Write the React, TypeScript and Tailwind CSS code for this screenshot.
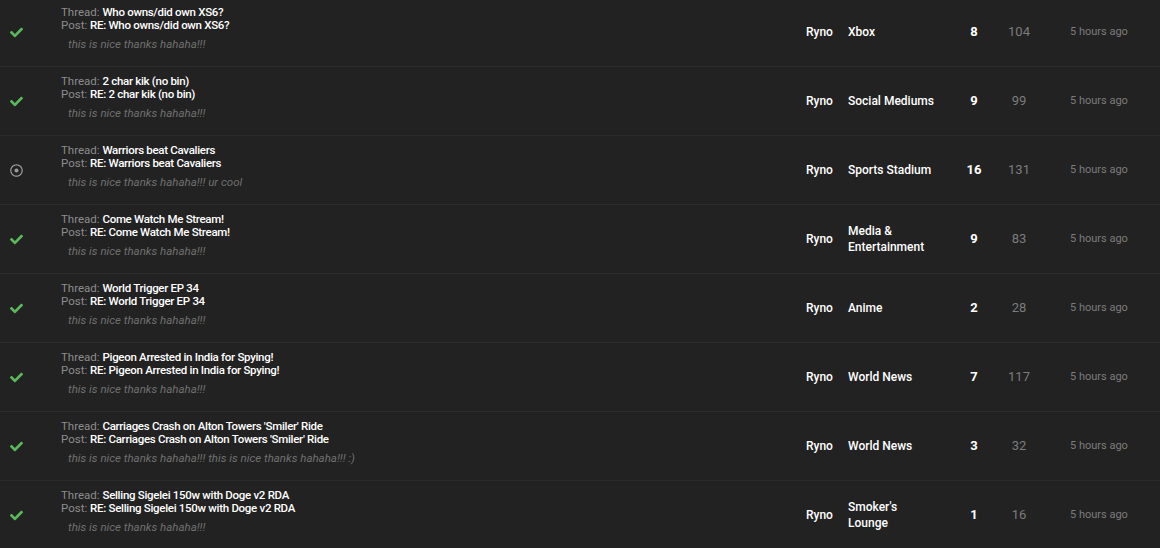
import { FaCheck, FaRegDotCircle } from "react-icons/fa";

type Row = {
    title: string;
    message: string;
    forum: string;
    replies: number;
    views: number;
    read: boolean;
};

const rows: Row[] = [
    { title: "Who owns/did own XS6?", message: "this is nice thanks hahaha!!!", forum: "Xbox", replies: 8, views: 104, read: true },
    { title: "2 char kik (no bin)", message: "this is nice thanks hahaha!!!", forum: "Social Mediums", replies: 9, views: 99, read: true },
    { title: "Warriors beat Cavaliers", message: "this is nice thanks hahaha!!! ur cool", forum: "Sports Stadium", replies: 16, views: 131, read: false },
    { title: "Come Watch Me Stream!", message: "this is nice thanks hahaha!!!", forum: "Media & Entertainment", replies: 9, views: 83, read: true },
    { title: "World Trigger EP 34", message: "this is nice thanks hahaha!!!", forum: "Anime", replies: 2, views: 28, read: true },
    { title: "Pigeon Arrested in India for Spying!", message: "this is nice thanks hahaha!!!", forum: "World News", replies: 7, views: 117, read: true },
    { title: "Carriages Crash on Alton Towers 'Smiler' Ride", message: "this is nice thanks hahaha!!! this is nice thanks hahaha!!! :)", forum: "World News", replies: 3, views: 32, read: true },
    { title: "Selling Sigelei 150w with Doge v2 RDA", message: "this is nice thanks hahaha!!!", forum: "Smoker's Lounge", replies: 1, views: 16, read: true },
];

function PostRow({ row }: { row: Row }) {
    return (
        <div className="flex h-[69px] items-center border-b border-[#2c2c2c]">
            <div className="flex w-[61px] shrink-0 pl-[10px]">
                {row.read ? (
                    <FaCheck className="text-[#5cb85c]" size={13} />
                ) : (
                    <FaRegDotCircle className="text-[#9a9a9a]" size={13} />
                )}
            </div>
            <div className="flex-1 self-start pt-[8px] text-[11.5px] leading-[13px]">
                <div>
                    <span className="text-[#8c8c8c]">Thread: </span>
                    <span className="font-medium tracking-[-0.3px] text-white">{row.title}</span>
                </div>
                <div>
                    <span className="text-[#8c8c8c]">Post: </span>
                    <span className="font-medium tracking-[-0.3px] text-white">RE: {row.title}</span>
                </div>
                <div className="mt-[5px] pl-[7px] italic leading-[14px] text-[#707070]">
                    {row.message}
                </div>
            </div>
            <div className="w-[42px] shrink-0 text-[12px] font-medium text-white">Ryno</div>
            <div className="w-[100px] shrink-0 pr-[12px] text-[12px] leading-[16px] font-medium text-white">
                {row.forum}
            </div>
            <div className="w-[52px] shrink-0 text-center text-[13px] font-bold text-white">
                {row.replies}
            </div>
            <div className="w-[38px] shrink-0 text-center text-[13px] text-[#7c7c7c]">
                {row.views}
            </div>
            <div className="w-[122px] shrink-0 pl-[32px] text-[11px] text-[#7c7c7c]">5 hours ago</div>
        </div>
    );
}

export default function App() {
    return (
        <div
            className="h-[548px] w-[1160px] overflow-hidden bg-[#222222]"
            style={{ fontFamily: 'Roboto, "Open Sans", sans-serif' }}
        >
            <div className="mt-[-2px]">
                {rows.map((row) => (
                    <PostRow key={row.title} row={row} />
                ))}
            </div>
        </div>
    );
}
